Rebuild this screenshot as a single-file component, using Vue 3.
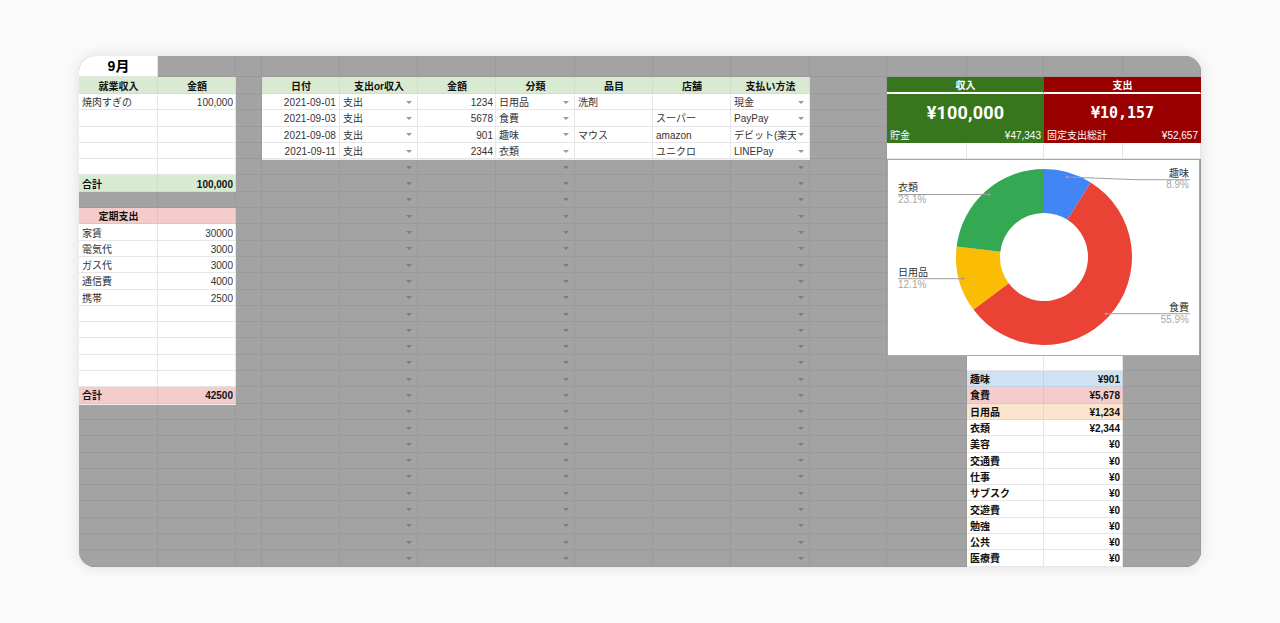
<script setup>
const COLS = 15
const ROWS = 32
const cells = new Map()
const skipped = new Set()
const key = (r, c) => `${r}:${c}`
const put = (r, c, text, cls = '') => cells.set(key(r, c), { text, cls })

// Row 0
put(0, 0, '9月', 'lit month')

// Income table
put(1, 0, '就業収入', 'green head')
put(1, 1, '金額', 'green head')
put(2, 0, '焼肉すぎの', 'lit')
put(2, 1, '100,000', 'lit num')
for (let r = 3; r <= 6; r++) { put(r, 0, '', 'lit'); put(r, 1, '', 'lit') }
put(7, 0, '合計', 'green bold')
put(7, 1, '100,000', 'green bold num')

// Fixed costs table
put(9, 0, '定期支出', 'pink head')
put(9, 1, '', 'pink')
const fixed = [['家賃', '30000'], ['電気代', '3000'], ['ガス代', '3000'], ['通信費', '4000'], ['携帯', '2500']]
for (let i = 0; i < 10; i++) {
  const row = fixed[i] || ['', '']
  put(10 + i, 0, row[0], 'lit')
  put(10 + i, 1, row[1], 'lit num')
}
put(20, 0, '合計', 'pink bold cap')
put(20, 1, '42500', 'pink bold num cap')

// Transactions table
;['日付', '支出or収入', '金額', '分類', '品目', '店舗', '支払い方法'].forEach((t, i) => put(1, 3 + i, t, 'green head'))
const tx = [
  ['2021-09-01', '支出', '1234', '日用品', '洗剤', '', '現金'],
  ['2021-09-03', '支出', '5678', '食費', '', 'スーパー', 'PayPay'],
  ['2021-09-08', '支出', '901', '趣味', 'マウス', 'amazon', 'デビット(楽天'],
  ['2021-09-11', '支出', '2344', '衣類', '', 'ユニクロ', 'LINEPay']
]
tx.forEach((row, i) => row.forEach((t, j) => {
  const base = j === 0 ? 'lit num date' : j === 2 ? 'lit num' : 'lit'
  put(2 + i, 3 + j, t, i === 3 ? `${base} cap` : base)
}))

// Summary tiles
put(1, 11, '収入', 'income head span2 tile-head'); skipped.add(key(1, 12))
put(1, 13, '支出', 'expense head span2 tile-head'); skipped.add(key(1, 14))
put(2, 11, '¥100,000', 'income big sans')
put(2, 13, '¥10,157', 'expense big mono')
skipped.add(key(2, 12)); skipped.add(key(2, 14))
for (const c of [11, 12, 13, 14]) skipped.add(key(3, c))
put(4, 11, '貯金', 'income')
put(4, 12, '¥47,343', 'income num')
put(4, 13, '固定支出総計', 'expense')
put(4, 14, '¥52,657', 'expense num')
for (const c of [11, 12, 13, 14]) put(5, c, '', 'lit')

// Category table
for (let r = 17; r <= 18; r++) { put(r, 12, '', 'lit'); put(r, 13, '', 'lit') }
const cats = [
  ['趣味', '¥901', 'blue'], ['食費', '¥5,678', 'rose'], ['日用品', '¥1,234', 'peach'], ['衣類', '¥2,344', 'lit'],
  ['美容', '¥0', 'lit'], ['交通費', '¥0', 'lit'], ['仕事', '¥0', 'lit'], ['サブスク', '¥0', 'lit'],
  ['交遊費', '¥0', 'lit'], ['勉強', '¥0', 'lit'], ['公共', '¥0', 'lit'], ['医療費', '¥0', 'lit']
]
cats.forEach(([a, b, cls], i) => {
  put(19 + i, 12, a, `${cls} bold`)
  put(19 + i, 13, b, `${cls} bold num`)
})

const DROPDOWNS = new Set([4, 6, 9])
const grid = []
for (let r = 0; r < ROWS; r++) {
  for (let c = 0; c < COLS; c++) {
    const k = key(r, c)
    if (skipped.has(k)) continue
    const cell = cells.get(k) || { text: '', cls: '' }
    grid.push({ id: k, text: cell.text, cls: cell.cls, arrow: DROPDOWNS.has(c) && r >= 2 && r < 31 })
  }
}

// Donut
const CX = 1044, CY = 257, R = 88, IR = 44
const slices = [
  { share: 8.9, color: '#4285f4' },
  { share: 55.9, color: '#ea4335' },
  { share: 12.1, color: '#fbbc04' },
  { share: 23.1, color: '#34a853' }
]
const pt = (rad, frac) => {
  const a = frac * 2 * Math.PI
  return `${(CX + rad * Math.sin(a)).toFixed(2)} ${(CY - rad * Math.cos(a)).toFixed(2)}`
}
let acc = 0
const arcs = slices.map(s => {
  const a = acc / 100, b = (acc + s.share) / 100
  acc += s.share
  const large = s.share > 50 ? 1 : 0
  return {
    color: s.color,
    d: `M${pt(R, a)}A${R} ${R} 0 ${large} 1 ${pt(R, b)}L${pt(IR, b)}A${IR} ${IR} 0 ${large} 0 ${pt(IR, a)}Z`
  }
})
const labels = [
  { name: '趣味', pct: '8.9%', x: 1189, anchor: 'end', y: 177, py: 188, line: '1067 177 1137 179.7 1190 179.7', dot: [1067, 177] },
  { name: '食費', pct: '55.9%', x: 1189, anchor: 'end', y: 311, py: 323, line: '1106 313.7 1190 313.7', dot: [1106, 313.7] },
  { name: '衣類', pct: '23.1%', x: 898, anchor: 'start', y: 191, py: 203, line: '898 194.5 989 194.5', dot: [989, 194.5] },
  { name: '日用品', pct: '12.1%', x: 898, anchor: 'start', y: 276, py: 288, line: '898 278.7 963 278.7', dot: [963, 278.7] }
]
</script>

<template>
  <div class="page">
    <div class="sheet">
      <div class="grid">
        <div v-for="cell in grid" :key="cell.id" class="cell" :class="cell.cls">
          <span class="txt" :class="{ 'has-arrow': cell.arrow }">{{ cell.text }}</span>
          <i v-if="cell.arrow" class="arrow"></i>
        </div>
      </div>
      <div class="chart">
        <svg viewBox="887 159 313 197" width="313" height="197">
          <path v-for="a in arcs" :key="a.color" :d="a.d" :fill="a.color" />
          <g v-for="l in labels" :key="l.name">
            <polyline :points="l.line" fill="none" stroke="#9e9e9e" stroke-width="1" />
            <circle :cx="l.dot[0]" :cy="l.dot[1]" r="1.3" fill="#9e9e9e" />
            <text :x="l.x" :y="l.y" :text-anchor="l.anchor" class="lbl">{{ l.name }}</text>
            <text :x="l.x" :y="l.py" :text-anchor="l.anchor" class="pct">{{ l.pct }}</text>
          </g>
        </svg>
      </div>
    </div>
  </div>
</template>

<style>
html, body { background: #fafafa; }
</style>

<style scoped>
.page {
  height: 623px;
  display: flex;
  align-items: center;
  justify-content: center;
  background: #fafafa;
  font-family: "Liberation Sans", "Noto Sans CJK JP", sans-serif;
}
.sheet {
  position: relative;
  width: 1122px;
  height: 511px;
  border-radius: 16px;
  overflow: hidden;
  background: #a3a3a3;
  box-shadow: 0 0 14px rgba(0, 0, 0, 0.12);
}
.grid {
  display: grid;
  grid-template-columns: 79px 78px 26px 78px 78px 78px 79px 78px 78px 79px 77px 80px 77px 79px 78px;
  grid-template-rows: 21px 17px;
  grid-auto-rows: 16.3px;
  font-size: 10px;
  color: #333;
}
.cell {
  position: relative;
  box-sizing: border-box;
  min-width: 0;
  display: flex;
  align-items: center;
  padding: 2px 2px 0 3px;
  background: #a3a3a3;
  border-right: 1px solid #9a9a9a;
  border-bottom: 1px solid #9a9a9a;
  line-height: 1;
  white-space: nowrap;
  overflow: hidden;
}
.txt { overflow: hidden; min-width: 0; flex: 1 1 auto; line-height: 13px; }
.txt.has-arrow { margin-right: 11px; }
.lit { background: #fff; border-color: #e6e6e6; }
.green { background: #d9ead3; border-color: #cfdfca; }
.pink { background: #f4cccc; border-color: #e6c0c0; }
.blue { background: #cfe2f3; border-color: #bfd2e2; }
.rose { background: #f4cccc; border-color: #e6c0c0; }
.peach { background: #fce5cd; border-color: #ecd6c0; }
.bold, .head { font-weight: 700; color: #111; }
.head { justify-content: center; text-align: center; }
.head .txt { text-align: center; }
.num .txt { text-align: right; }
.date { padding-right: 3px; letter-spacing: 0.1px; }
.cap { box-shadow: 0 1px 0 #efefef; z-index: 1; overflow: visible; }
.month { padding-top: 0; font-size: 14px; font-weight: 700; color: #000; text-align: center; }
.month .txt { text-align: center; line-height: 16px; }
.income { background: #38761d; border-color: #38761d; color: #fff; }
.expense { background: #990000; border-color: #990000; color: #fff; }
.span2 { grid-column: span 2; }
.tile-head { border-bottom: 2px solid #fff; padding-top: 1px; }
.big {
  grid-column: span 2;
  grid-row: span 2;
  padding-top: 6px;
  font-weight: 700;
  text-align: center;
}
.big .txt { text-align: center; line-height: 22px; }
.sans { font-family: Roboto, "Liberation Sans", sans-serif; font-size: 18px; letter-spacing: 0.2px; }
.mono { font-family: "DejaVu Sans Mono", monospace; font-size: 15px; }
.arrow {
  position: absolute;
  right: 5px;
  top: 50%;
  margin-top: -1px;
  width: 0;
  height: 0;
  border-left: 3px solid transparent;
  border-right: 3px solid transparent;
  border-top: 3px solid #7c7c7c;
}
.lit .arrow { border-top-color: #999; }
.chart {
  position: absolute;
  left: 808px;
  top: 103px;
  width: 313px;
  height: 197px;
  background: #fff;
  outline: 1px solid #a8a8a8;
  outline-offset: -1px;
  z-index: 2;
}
.chart svg { display: block; }
.lbl { font-size: 10px; fill: #333; }
.pct { font-size: 10px; fill: #a6a6a6; }
</style>
